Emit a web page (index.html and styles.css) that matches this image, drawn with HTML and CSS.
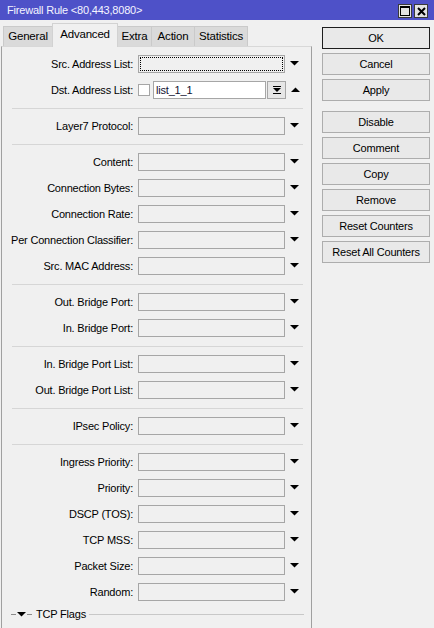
FILE: index.html
```html
<!DOCTYPE html>
<html>
<head>
<meta charset="utf-8">
<link rel="stylesheet" href="styles.css">
</head>
<body>
<div class="titlebar">
  <span class="title">Firewall Rule &lt;80,443,8080&gt;</span>
  <div class="wbtns">
    <span class="wbtn"><svg width="10" height="10" viewBox="0 0 10 10"><rect x="0.5" y="0.5" width="9" height="9" fill="none" stroke="#000"/><rect x="0" y="0" width="10" height="2" fill="#000"/></svg></span>
    <span class="wbtn"><svg width="9" height="9" viewBox="0 0 9 9"><path d="M1 1 L8 8 M8 1 L1 8" stroke="#000" stroke-width="2"/></svg></span>
  </div>
</div>
<div class="main">
  <div class="left">
    <div class="tabs">
      <span class="tab w-general">General</span>
      <span class="tab active w-adv">Advanced</span>
      <span class="tab w-extra">Extra</span>
      <span class="tab w-action">Action</span>
      <span class="tab w-stats">Statistics</span>
    </div>
    <div class="panel">
      <div class="row"><span class="lbl">Src. Address List:</span><span class="field focus"></span><svg class="arrow" width="9" height="5" viewBox="0 0 9 5"><polygon points="0,0 9,0 4.5,4.5" fill="#000"/></svg></div>
      <div class="row"><span class="lbl">Dst. Address List:</span><span class="chk"></span><span class="field short white">list_1_1</span><span class="sbtn"><svg width="8" height="9" viewBox="0 0 8 9"><rect x="0" y="0" width="8" height="1" fill="#000"/><polygon points="0,2 8,2 4,6" fill="#000"/><rect x="0" y="7" width="8" height="1" fill="#000"/></svg></span><svg class="arrow" width="9" height="5" viewBox="0 0 9 5"><polygon points="0,5 9,5 4.5,0.5" fill="#000"/></svg></div>
      <div class="sep"></div>
      <div class="row"><span class="lbl">Layer7 Protocol:</span><span class="field"></span><svg class="arrow" width="9" height="5" viewBox="0 0 9 5"><polygon points="0,0 9,0 4.5,4.5" fill="#000"/></svg></div>
      <div class="sep"></div>
      <div class="row"><span class="lbl">Content:</span><span class="field"></span><svg class="arrow" width="9" height="5" viewBox="0 0 9 5"><polygon points="0,0 9,0 4.5,4.5" fill="#000"/></svg></div>
      <div class="row"><span class="lbl">Connection Bytes:</span><span class="field"></span><svg class="arrow" width="9" height="5" viewBox="0 0 9 5"><polygon points="0,0 9,0 4.5,4.5" fill="#000"/></svg></div>
      <div class="row"><span class="lbl">Connection Rate:</span><span class="field"></span><svg class="arrow" width="9" height="5" viewBox="0 0 9 5"><polygon points="0,0 9,0 4.5,4.5" fill="#000"/></svg></div>
      <div class="row"><span class="lbl">Per Connection Classifier:</span><span class="field"></span><svg class="arrow" width="9" height="5" viewBox="0 0 9 5"><polygon points="0,0 9,0 4.5,4.5" fill="#000"/></svg></div>
      <div class="row"><span class="lbl">Src. MAC Address:</span><span class="field"></span><svg class="arrow" width="9" height="5" viewBox="0 0 9 5"><polygon points="0,0 9,0 4.5,4.5" fill="#000"/></svg></div>
      <div class="sep"></div>
      <div class="row"><span class="lbl">Out. Bridge Port:</span><span class="field"></span><svg class="arrow" width="9" height="5" viewBox="0 0 9 5"><polygon points="0,0 9,0 4.5,4.5" fill="#000"/></svg></div>
      <div class="row"><span class="lbl">In. Bridge Port:</span><span class="field"></span><svg class="arrow" width="9" height="5" viewBox="0 0 9 5"><polygon points="0,0 9,0 4.5,4.5" fill="#000"/></svg></div>
      <div class="sep"></div>
      <div class="row"><span class="lbl">In. Bridge Port List:</span><span class="field"></span><svg class="arrow" width="9" height="5" viewBox="0 0 9 5"><polygon points="0,0 9,0 4.5,4.5" fill="#000"/></svg></div>
      <div class="row"><span class="lbl">Out. Bridge Port List:</span><span class="field"></span><svg class="arrow" width="9" height="5" viewBox="0 0 9 5"><polygon points="0,0 9,0 4.5,4.5" fill="#000"/></svg></div>
      <div class="sep"></div>
      <div class="row"><span class="lbl">IPsec Policy:</span><span class="field"></span><svg class="arrow" width="9" height="5" viewBox="0 0 9 5"><polygon points="0,0 9,0 4.5,4.5" fill="#000"/></svg></div>
      <div class="sep"></div>
      <div class="row"><span class="lbl">Ingress Priority:</span><span class="field"></span><svg class="arrow" width="9" height="5" viewBox="0 0 9 5"><polygon points="0,0 9,0 4.5,4.5" fill="#000"/></svg></div>
      <div class="row"><span class="lbl">Priority:</span><span class="field"></span><svg class="arrow" width="9" height="5" viewBox="0 0 9 5"><polygon points="0,0 9,0 4.5,4.5" fill="#000"/></svg></div>
      <div class="row"><span class="lbl">DSCP (TOS):</span><span class="field"></span><svg class="arrow" width="9" height="5" viewBox="0 0 9 5"><polygon points="0,0 9,0 4.5,4.5" fill="#000"/></svg></div>
      <div class="row"><span class="lbl">TCP MSS:</span><span class="field"></span><svg class="arrow" width="9" height="5" viewBox="0 0 9 5"><polygon points="0,0 9,0 4.5,4.5" fill="#000"/></svg></div>
      <div class="row"><span class="lbl">Packet Size:</span><span class="field"></span><svg class="arrow" width="9" height="5" viewBox="0 0 9 5"><polygon points="0,0 9,0 4.5,4.5" fill="#000"/></svg></div>
      <div class="row"><span class="lbl">Random:</span><span class="field"></span><svg class="arrow" width="9" height="5" viewBox="0 0 9 5"><polygon points="0,0 9,0 4.5,4.5" fill="#000"/></svg></div>
      <div class="flags"><span class="dash"></span><svg class="ftri" width="9" height="5" viewBox="0 0 9 5"><polygon points="0,0 9,0 4.5,4.5" fill="#000"/></svg><span class="dash"></span><span class="ftext">TCP Flags</span><span class="fline"></span></div>
    </div>
  </div>
  <div class="buttons">
    <span class="btn ok">OK</span>
    <span class="btn">Cancel</span>
    <span class="btn">Apply</span>
    <span class="bgap"></span>
    <span class="btn">Disable</span>
    <span class="btn">Comment</span>
    <span class="btn">Copy</span>
    <span class="btn">Remove</span>
    <span class="btn">Reset Counters</span>
    <span class="btn">Reset All Counters</span>
  </div>
</div>
</body>
</html>
```

FILE: styles.css
```css
* { box-sizing: border-box; }
html, body { margin: 0; padding: 0; }
body {
  width: 434px;
  height: 628px;
  overflow: hidden;
  background: #f0f0f0;
  font-family: "Liberation Sans", Arial, sans-serif;
  font-size: 11px;
  letter-spacing: -0.2px;
  color: #000;
}
.titlebar {
  height: 20px;
  background: #4e51c8;
  display: flex;
  align-items: center;
  justify-content: space-between;
  padding: 0 6px 0 7px;
}
.title { color: #f4f4ff; font-size: 11px; }
.wbtns { display: flex; gap: 2px; margin-top: 2px; }
.wbtn {
  width: 14px; height: 14px;
  background: #e3e3e3;
  border: 1px solid #3a3a3a;
  display: flex; align-items: center; justify-content: center;
}
.main { display: flex; align-items: flex-start; }
.left { width: 312px; }
.tabs {
  height: 26px;
  display: flex;
  align-items: flex-end;
  padding-left: 3px;
}
.tab {
  height: 20px;
  line-height: 19px;
  text-align: center;
  background: #dadada;
  border: 1px solid #cacaca;
  border-bottom: none;
  margin-right: -1px;
  font-size: 11.5px;
}
.tab.active {
  height: 24px;
  line-height: 21px;
  background: #f0f0f0;
  border-color: #d2d2d2;
  margin-bottom: -1px;
  position: relative;
  z-index: 1;
}
.w-general { width: 50px; }
.w-adv { width: 66px; }
.w-extra { width: 35px; }
.w-action { width: 44px; }
.w-stats { width: 54px; }
.panel {
  margin-left: 1px;
  width: 311px;
  height: 600px;
  border-left: 1px solid #a0a0a0;
  border-right: 1px solid #a0a0a0;
  border-top: 1px solid #d8d8d8;
  padding-top: 4px;
}
.row {
  height: 26px;
  display: flex;
  align-items: center;
}
.lbl {
  width: 136px;
  padding-right: 5px;
  text-align: right;
  white-space: nowrap;
}
.field {
  width: 147px;
  height: 18px;
  border: 1px solid #a6a6a6;
  background: #f0f0f0;
  padding-left: 2px;
  line-height: 16px;
}
.field.focus { outline: 1px dotted #000; outline-offset: -3px; }
.field.white { background: #fff; color: #111133; }
.field.short { width: 113px; }
.chk {
  width: 12px; height: 12px;
  border: 1px solid #a6a6a6;
  background: #fff;
  margin-right: 3px;
}
.sbtn {
  width: 19px; height: 18px;
  margin-left: 1px;
  border: 1px solid #a6a6a6;
  background: #e6e6e6;
  display: flex; align-items: center; justify-content: center;
}
.arrow { margin-left: 5px; margin-top: -1px; display: block; }
.sep { height: 10px; display: flex; align-items: center; }
.sep::before {
  content: "";
  display: block;
  width: 291px;
  height: 1px;
  margin-left: 10px;
  background: #d6d6d6;
}
.flags {
  height: 18px;
  display: flex;
  align-items: center;
  padding-left: 9px;
  padding-right: 7px;
}
.dash { width: 5px; height: 1px; background: #8c8c8c; }
.ftri { display: block; margin: 0 1px; }
.ftext { margin-left: 4px; white-space: nowrap; font-size: 11px; }
.fline { flex: 1; height: 1px; background: #c8c8c8; margin-left: 3px; }
.buttons {
  margin-left: 10px;
  padding-top: 7px;
  width: 108px;
  display: flex;
  flex-direction: column;
}
.btn {
  height: 22px;
  margin-bottom: 4px;
  border: 1px solid #adadad;
  background: #e9e9e9;
  text-align: center;
  line-height: 20px;
  white-space: nowrap;
}
.btn.ok { border-color: #1e1e1e; }
.bgap { height: 6px; }
```
